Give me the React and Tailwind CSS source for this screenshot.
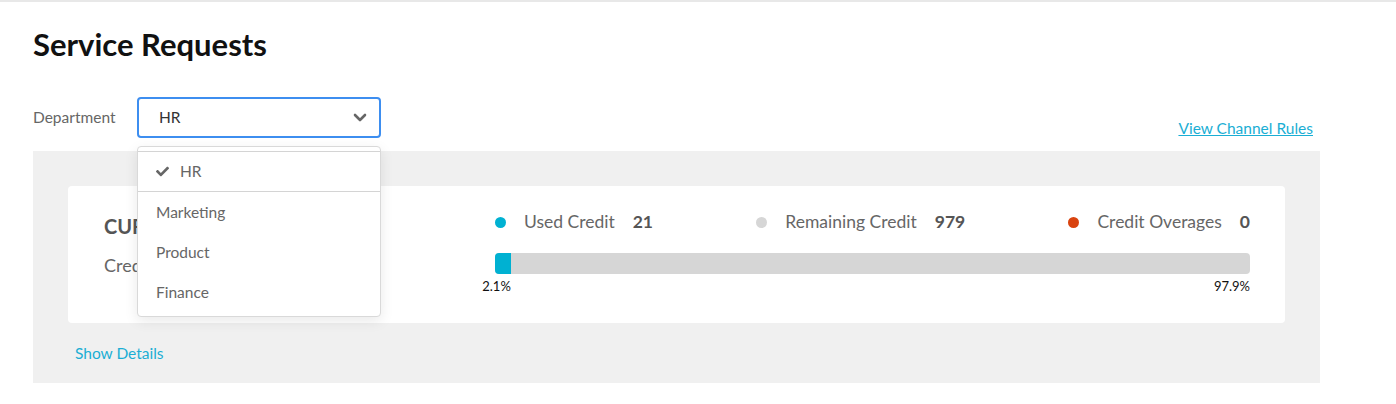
import { FaCheck } from "react-icons/fa";

const DEPARTMENTS = ["HR", "Marketing", "Product", "Finance"];

const USED = 21;
const REMAINING = 979;
const OVERAGES = 0;
const TOTAL = USED + REMAINING;

function Legend({ dot, label, value }) {
  return (
    <div className="flex items-center">
      <span className={`w-[11px] h-[11px] rounded-full ${dot}`} />
      <span className="ml-[18px] text-[17.5px] text-[#666]">{label}</span>
      <span className="ml-[18px] text-[17.5px] font-bold text-[#555]">{value}</span>
    </div>
  );
}

function DepartmentSelect() {
  const selected = "HR";
  return (
    <div className="relative w-[244px]">
      <div className="h-[41px] flex items-center justify-between border-2 border-[#3d8ef0] rounded-[4px] pl-[20px] pr-[12px] bg-white">
        <span className="text-[15.5px] text-[#333]">{selected}</span>
        <svg width="14" height="10" viewBox="0 0 14 10">
          <polyline points="2,2 7,7 12,2" fill="none" stroke="#666" strokeWidth="2.6" strokeLinecap="round" strokeLinejoin="round" />
        </svg>
      </div>

      {/* open menu */}
      <div className="absolute left-0 top-[49px] w-full z-10 bg-white border border-[#d9d9d9] rounded-[4px] pt-[4px] pb-[4px] shadow-[0_4px_14px_rgba(0,0,0,0.09)]">
        <div className="border-t border-[#d4d4d4]">
          {DEPARTMENTS.map((d) => (
            <div
              key={d}
              className={`h-[40px] flex items-center px-[18px] text-[15.5px] text-[#666] ${d === selected ? "border-b border-[#d4d4d4]" : "pt-[2px]"}`}
            >
              {d === selected && <FaCheck className="text-[#666] w-[13px] h-[13px] mr-[11px]" />}
              {d}
            </div>
          ))}
        </div>
      </div>
    </div>
  );
}

export default function App() {
  const usedPct = ((USED / TOTAL) * 100).toFixed(1);
  const remainingPct = ((REMAINING / TOTAL) * 100).toFixed(1);

  return (
    <div className="min-h-[404px] bg-white border-t-2 border-[#e8e8e8] font-['Lato',sans-serif]">
      <div className="pl-[33px] pr-[76px] pt-[24px]">
        <h1 className="text-[31px] font-bold text-[#111] leading-[36px]">Service Requests</h1>

        {/* Department filter */}
        <div className="mt-[35px] flex items-end justify-between">
          <div className="flex items-center">
            <span className="w-[104px] text-[15.5px] text-[#666]">Department</span>
            <DepartmentSelect />
          </div>
          <a href="#" className="mr-[7px] text-[15.5px] leading-[20px] text-[#1aaed4] underline">
            View Channel Rules
          </a>
        </div>

        {/* Credit panel */}
        <div className="mt-[13px] bg-[#f0f0f0] pt-[35px] px-[35px] h-[232px]">
          <div className="bg-white rounded-[4px] h-[137px] flex">
            <div className="w-[427px] pl-[36px] pt-[27px]">
              <p className="text-[20px] font-bold text-[#555] leading-[26px]">CURRENT PLAN</p>
              <p className="mt-[14px] text-[18px] text-[#666] leading-[24px]">Credits 1000 / month</p>
            </div>

            <div className="w-[755px] pt-[26px]">
              <div className="flex items-center justify-between h-[20px]">
                <Legend dot="bg-[#00b1d2]" label="Used Credit" value={USED} />
                <Legend dot="bg-[#d6d6d6]" label="Remaining Credit" value={REMAINING} />
                <Legend dot="bg-[#d9430f]" label="Credit Overages" value={OVERAGES} />
              </div>

              <div className="mt-[21px] h-[21px] bg-[#d6d6d6] rounded-[4px] overflow-hidden flex">
                <div className="h-full bg-[#00b1d2]" style={{ width: `${usedPct}%` }} />
              </div>
              <div className="mt-[4px] flex text-[13px] text-[#111] leading-[16px]">
                <div className="flex justify-end whitespace-nowrap" style={{ width: `${usedPct}%` }}>
                  {usedPct}%
                </div>
                <div className="flex-1 text-right">{remainingPct}%</div>
              </div>
            </div>
          </div>

          <a href="#" className="block mt-[20px] ml-[7px] text-[15.5px] leading-[20px] text-[#1aaed4]">
            Show Details
          </a>
        </div>
      </div>
    </div>
  );
}
